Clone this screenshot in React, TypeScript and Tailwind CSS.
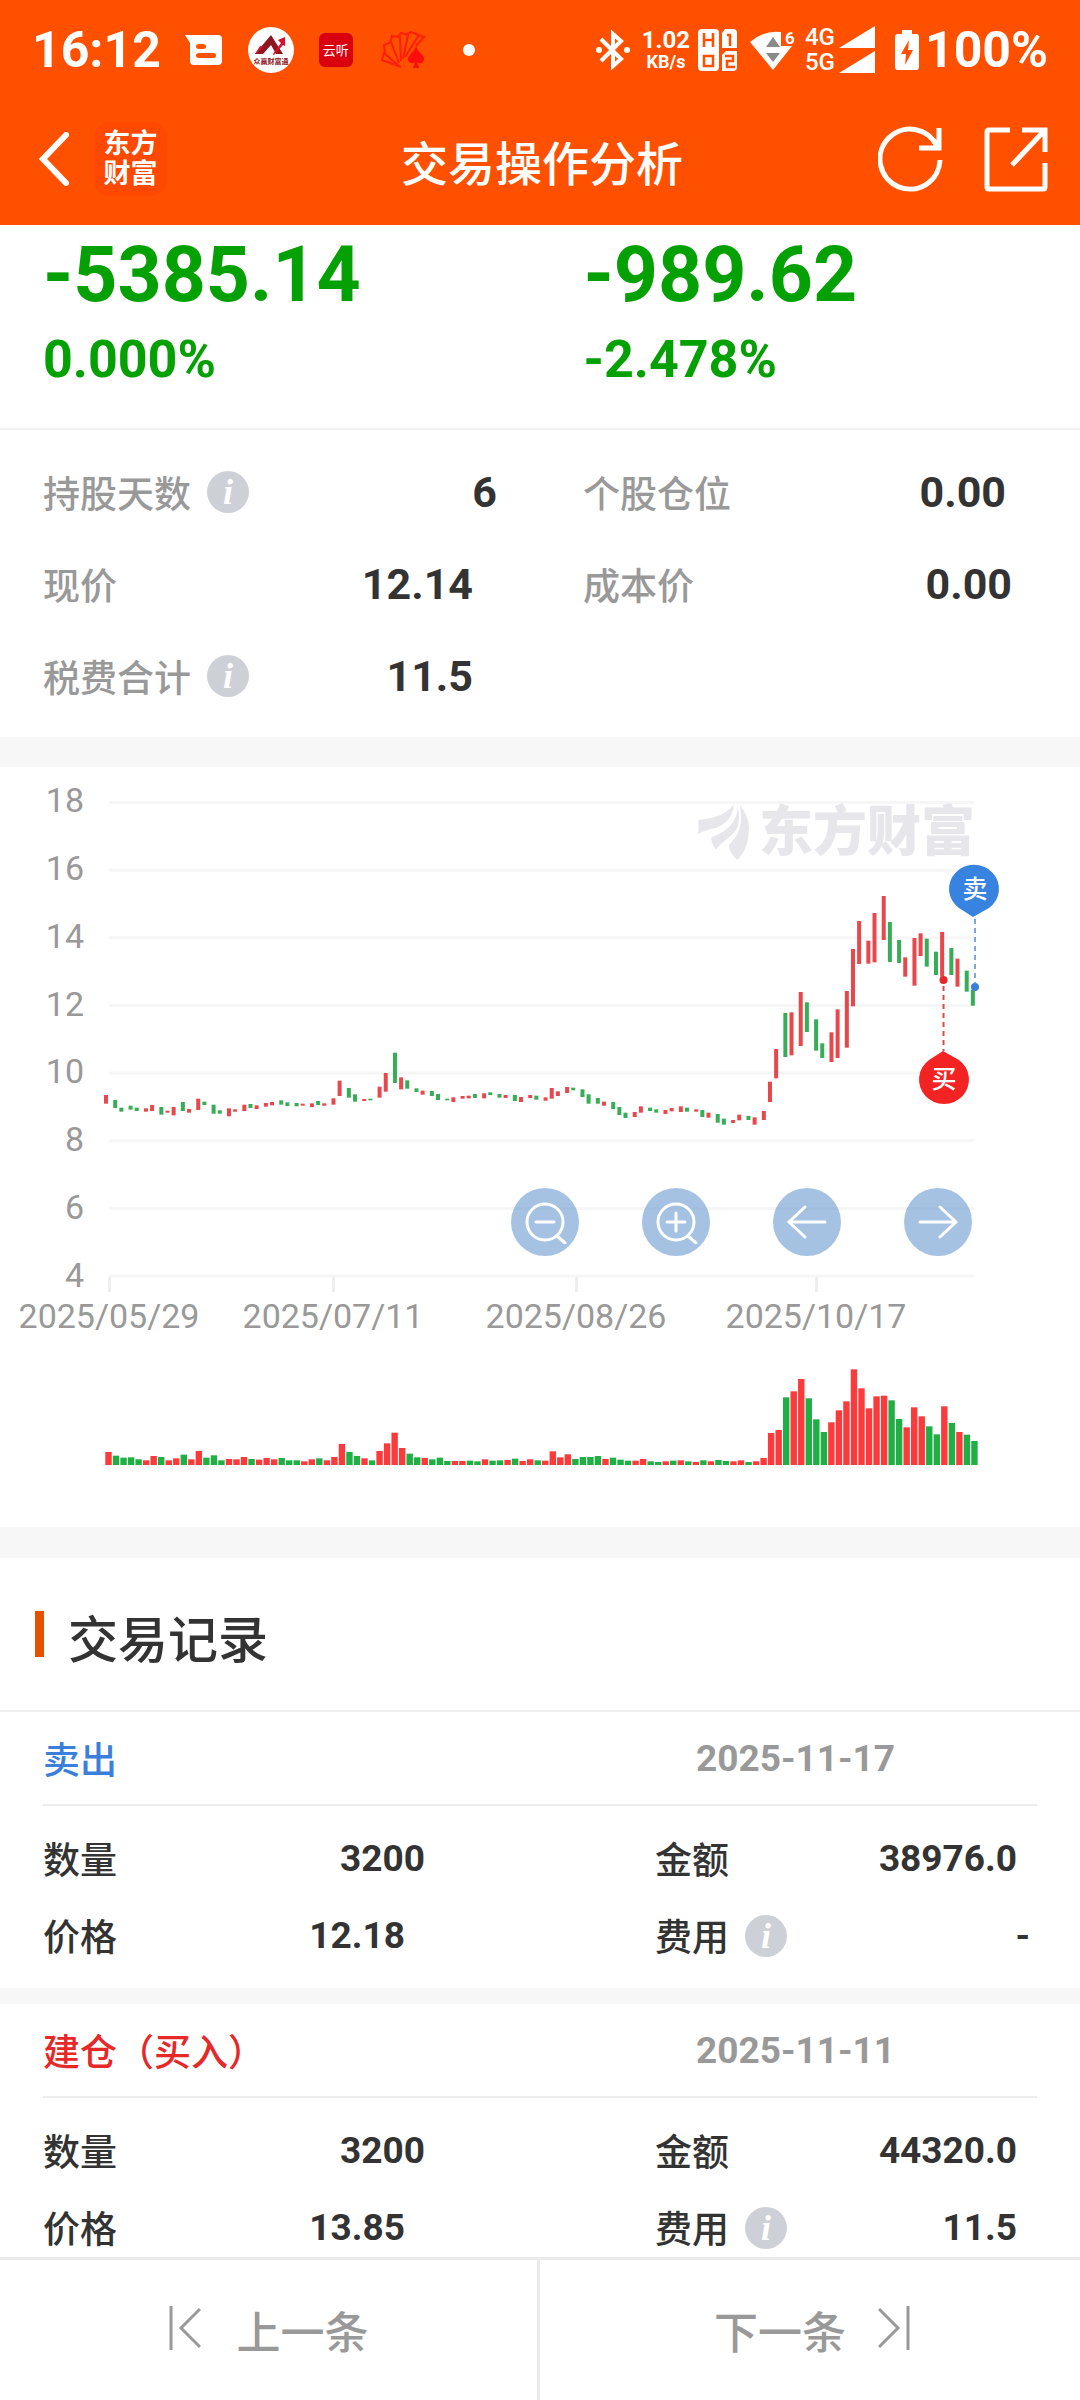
import type { ReactNode } from "react";

type Direction = "R" | "G";

interface Stat {
    label: string;
    value: string;
    hasInfo?: boolean;
    pad: string;
}

interface TradeRecord {
    title: string;
    titleColor: string;
    date: string;
    fields: Stat[];
}

const stats: Stat[] = [
    { label: "持股天数", value: "6", hasInfo: true, pad: "pr-[86px]" },
    { label: "个股仓位", value: "0.00", pad: "pr-[74px]" },
    { label: "现价", value: "12.14", pad: "pr-[110px]" },
    { label: "成本价", value: "0.00", pad: "pr-[68px]" },
    { label: "税费合计", value: "11.5", hasInfo: true, pad: "pr-[110px]" },
];

const records: TradeRecord[] = [
    {
        title: "卖出",
        titleColor: "text-[#3a80db]",
        date: "2025-11-17",
        fields: [
            { label: "数量", value: "3200", pad: "pr-[230px]" },
            { label: "金额", value: "38976.0", pad: "pr-[63px]" },
            { label: "价格", value: "12.18", pad: "pr-[250px]" },
            { label: "费用", value: "-", hasInfo: true, pad: "pr-[50px]" },
        ],
    },
    {
        title: "建仓（买入）",
        titleColor: "text-[#e62828]",
        date: "2025-11-11",
        fields: [
            { label: "数量", value: "3200", pad: "pr-[230px]" },
            { label: "金额", value: "44320.0", pad: "pr-[63px]" },
            { label: "价格", value: "13.85", pad: "pr-[250px]" },
            { label: "费用", value: "11.5", hasInfo: true, pad: "pr-[63px]" },
        ],
    },
];

// Top and bottom of each day's bar, in thirds of a chart unit below CANDLE_TOP
const CANDLE_TOP = 263;
const candles: [number, number, Direction][] = [
    [195, 221, "R"], [210, 234, "G"], [233, 245, "G"], [227, 239, "G"], [233, 243, "G"], [235, 245, "R"],
    [225, 243, "R"], [231, 254, "G"], [242, 248, "R"], [231, 256, "R"], [216, 243, "G"], [237, 248, "R"],
    [206, 240, "R"], [215, 225, "G"], [224, 251, "G"], [241, 251, "G"], [235, 259, "R"], [238, 245, "R"],
    [224, 243, "R"], [222, 234, "G"], [226, 237, "R"], [219, 230, "R"], [216, 226, "R"], [211, 224, "G"],
    [217, 228, "G"], [219, 229, "G"], [221, 227, "R"], [220, 231, "R"], [213, 225, "G"], [220, 227, "R"],
    [205, 224, "R"], [152, 198, "R"], [174, 203, "G"], [193, 215, "G"], [207, 213, "R"], [206, 211, "G"],
    [170, 203, "R"], [129, 185, "R"], [68, 159, "G"], [142, 178, "R"], [151, 176, "G"], [175, 186, "G"],
    [182, 194, "R"], [183, 198, "G"], [192, 210, "G"], [206, 211, "G"], [202, 216, "R"], [198, 206, "R"],
    [197, 205, "R"], [192, 204, "G"], [190, 205, "R"], [187, 195, "G"], [192, 203, "G"], [195, 204, "R"],
    [195, 213, "G"], [201, 216, "R"], [195, 204, "R"], [197, 209, "G"], [202, 212, "R"], [174, 206, "R"],
    [184, 198, "R"], [171, 189, "R"], [173, 181, "G"], [178, 201, "G"], [193, 221, "G"], [204, 221, "G"],
    [215, 227, "R"], [216, 237, "G"], [231, 255, "G"], [248, 264, "G"], [246, 261, "R"], [229, 248, "R"],
    [233, 243, "G"], [238, 248, "G"], [240, 252, "R"], [234, 244, "R"], [229, 246, "R"], [233, 245, "G"],
    [238, 245, "R"], [240, 261, "G"], [248, 263, "R"], [252, 278, "G"], [266, 284, "G"], [270, 279, "R"],
    [254, 271, "R"], [258, 270, "G"], [262, 284, "R"], [243, 270, "R"], [155, 216, "R"], [57, 145, "R"],
    [-51, 81, "G"], [-53, 76, "R"], [-114, 48, "R"], [-83, 6, "G"], [-32, 62, "G"], [40, 84, "G"],
    [7, 96, "R"], [-62, 84, "R"], [-117, 53, "R"], [-243, -71, "R"], [-327, -198, "R"], [-268, -199, "R"],
    [-351, -203, "R"], [-402, -270, "R"], [-324, -204, "G"], [-270, -201, "G"], [-218, -160, "R"], [-276, -133, "R"],
    [-290, -222, "R"], [-274, -190, "G"], [-235, -165, "G"], [-294, -160, "R"], [-246, -165, "G"], [-214, -130, "R"],
    [-178, -115, "G"], [-120, -73, "G"],
];

// Volume heights, same third-of-a-unit scale
const VOLUME_BASE = 698;
const volumes = [
    39, 28, 22, 23, 17, 14, 27, 24, 14, 20, 31, 17, 42, 22, 29, 14, 18, 17, 24, 18, 16, 21, 17, 21, 14, 14, 11, 17, 20,
    14, 24, 63, 39, 27, 20, 14, 42, 65, 97, 51, 34, 23, 21, 17, 22, 12, 12, 12, 13, 11, 17, 13, 14, 15, 19, 12, 17, 14,
    13, 41, 23, 32, 18, 24, 24, 27, 18, 22, 16, 13, 13, 18, 11, 9, 11, 13, 14, 11, 9, 14, 11, 15, 12, 11, 14, 9, 11, 21,
    96, 105, 203, 221, 258, 200, 137, 99, 128, 164, 191, 287, 230, 170, 206, 208, 194, 138, 113, 173, 146, 116, 92, 176,
    126, 99, 91, 72,
];
const volumeColors =
    "RGGGGRRGRRGRRGGGRRRGRRRGGGRRGRRRGGRGRRRRGGRGGGRRGGRGGRGRRG" +
    "RRRRGGGGRGGGRRGGRGRGRGRGGRRGRRRRGRRGGGRRRRRRRRGGRRRGGRGRGG";

const dates = [
    { x: 109, label: "2025/05/29" },
    { x: 333, label: "2025/07/11" },
    { x: 576, label: "2025/08/26" },
    { x: 816, label: "2025/10/17" },
];

// Days snap to a coarse column grid, so gaps alternate between two and three columns
const candleX = (i: number) => 106 + Math.floor(i * 2.45 + 0.9) * 3.074;

function InfoButton({ label }: { label: string }) {
    return (
        <button
            type="button"
            aria-label={`${label}说明`}
            className="ml-4 flex size-[42px] items-center justify-center rounded-full bg-[#cdd0d6] font-['Liberation_Serif',serif] text-[36px] leading-none font-bold text-white italic"
        >
            i
        </button>
    );
}

function StatusBar() {
    return (
        <div className="flex h-[100px] items-center pr-8 pl-8 text-white">
            <span className="text-[50px] leading-none font-bold">16:12</span>
            <svg className="ml-6" width="38" height="32" viewBox="0 0 38 32">
                <path
                    d="M0 1h33q4 0 4 4v22q0 4-4 4H9q-4 0-4-4V9zM14 10q-3 0-3 2.500t3 2.500h4q3 0 3-2.500t-3-2.500zM14 19q-3 0-3 2.500t3 2.500h14q3 0 3-2.500t-3-2.500z"
                    fill="#fff"
                    fillRule="evenodd"
                />
            </svg>
            <svg className="ml-6" width="48" height="48" viewBox="0 0 48 48">
                <circle cx="24" cy="24" r="23" fill="#fff" />
                <path d="M8 28 24 9l12 19h-7l-5-9-8 9z" fill="#8e1620" />
                <path d="m13 20 5 1 8 7 8-11-3-3 7-3v9l-2-1-9 10-10-9-8 8H8z" fill="#d90f2b" />
                <text x="24" y="38" textAnchor="middle" fontSize="7" fontWeight="700" fill="#8e1620">
                    众赢财富通
                </text>
            </svg>
            <div className="ml-6 flex size-[34px] items-center justify-center rounded-md bg-[#d9000f] text-[13px] leading-none">
                云听
            </div>
            <svg className="ml-7" width="46" height="38" viewBox="0 0 46 38" fill="none" stroke="#ff1d0c" strokeWidth="2">
                <path d="M20 36 1 29l2-7 14 12M4 22l-1-8 7-3 8 21M9 12l2-7 8 1 1 24M17 6l3-4 7 2-5 24M26 3l4-2 8 3-14 22M35 3l8 3-8 9" />
                <path
                    d="M35 15c2 7 9 9 8 14-1 4-5 4-7 2l2 6h-6l2-6c-2 2-6 2-7-2-1-5 6-7 8-14z"
                    fill="#ff0d0d"
                    stroke="none"
                />
            </svg>
            <span className="ml-9 size-3 rounded-full bg-white" />

            <div className="ml-auto flex items-center">
                <svg width="34" height="42" viewBox="0 0 34 42" fill="none" stroke="#fff" strokeWidth="4">
                    <path d="m5 10 20 20-8 7V5l8 7L5 32" />
                    <circle cx="3" cy="21" r="3" fill="#fff" stroke="none" />
                    <circle cx="31" cy="21" r="3" fill="#fff" stroke="none" />
                </svg>
                <div className="ml-3 flex w-12 flex-col items-center font-bold">
                    <span className="text-2xl leading-6">1.02</span>
                    <span className="text-lg leading-5">KB/s</span>
                </div>
                <svg className="ml-2" width="40" height="42" viewBox="0 0 40 42">
                    <rect x="0" y="0" width="21" height="42" rx="4" fill="#fff" />
                    <path d="M27 0h8q4 0 4 4v15H24V4z" fill="#fff" />
                    <path d="M28 22h11v16q0 4-4 4H24V26z" fill="#fff" />
                    <path
                        d="M6 4v14M15 4v14M6 11h9M6 27h9v10H6zM29 6h3v11M27 27h8v5h-6v6h8"
                        fill="none"
                        stroke="#ff5000"
                        strokeWidth="2.500"
                    />
                </svg>
                <svg className="ml-3" width="47" height="42" viewBox="0 0 47 42">
                    <path d="M0 13Q14 1 31 3v14h11L23 41z" fill="#fff" />
                    <path d="m23 8 7 10H16zM23 33l-7-9h14z" fill="#8a8a8a" />
                    <text x="35" y="15" fontSize="17" fontWeight="700" fill="#fff">
                        6
                    </text>
                </svg>
                <div className="ml-2 flex flex-col text-2xl leading-[25px] font-medium">
                    <span>4G</span>
                    <span>5G</span>
                </div>
                <svg className="ml-1" width="36" height="48" viewBox="0 0 36 48" fill="#fff">
                    <path d="M36 0v22H0zM36 25v22H0z" />
                </svg>
                <svg className="ml-5" width="24" height="42" viewBox="0 0 24 42">
                    <path d="M7 1h10v4h4q3 0 3 3v30q0 3-3 3H3q-3 0-3-3V8q0-3 3-3h4z" fill="#fff" />
                    <path d="M14 11 6 25h5l-1 11 8-15h-5z" fill="#ff5000" />
                </svg>
                <span className="ml-1.5 text-[50px] leading-none font-bold">100%</span>
            </div>
        </div>
    );
}

function NavBar() {
    return (
        <div className="grid h-[125px] grid-cols-[1fr_auto_1fr] items-center pr-8 pb-2 pl-9 text-white">
            <div className="flex items-center">
                <button type="button" aria-label="返回">
                    <svg width="34" height="54" viewBox="0 0 34 54" fill="none" stroke="#fff" strokeWidth="6" strokeLinecap="round">
                        <path d="M30 3 7 27l23 24" />
                    </svg>
                </button>
                <div className="ml-6 flex h-[74px] w-[73px] items-center justify-center rounded-2xl bg-[#ff4800] text-[27px] leading-[30px] font-bold">
                    <span className="w-[54px] text-center">东方财富</span>
                </div>
            </div>
            <h1 className="pt-3 text-[47px] leading-none font-medium">交易操作分析</h1>
            <div className="flex justify-end gap-10">
                <button type="button" aria-label="刷新">
                    <svg width="66" height="66" viewBox="0 0 66 66" fill="none" stroke="#fff" strokeWidth="5">
                        <path d="M62 34A30 30 0 1 1 59 20M61 2v20H41" />
                        <path d="M59 21 51 10" strokeWidth="3" />
                    </svg>
                </button>
                <button type="button" aria-label="分享">
                    <svg width="64" height="66" viewBox="0 0 64 66" fill="none" stroke="#fff" strokeWidth="5">
                        <path d="M26 4H5q-2 0-2 2v55q0 2 2 2h54q2 0 2-2V37M38 4h23v22M28 39 60 5" />
                    </svg>
                </button>
            </div>
        </div>
    );
}

function Field({ field, labelClass, valueClass }: { field: Stat; labelClass: string; valueClass: string }) {
    return (
        <div className={`flex items-center justify-between ${field.pad}`}>
            <dt className={`flex items-center text-[37px] leading-none font-medium ${labelClass}`}>
                <span className="pt-1.5">{field.label}</span>
                {field.hasInfo && <InfoButton label={field.label} />}
            </dt>
            <dd className={`leading-none font-bold text-[#333] ${valueClass}`}>{field.value}</dd>
        </div>
    );
}

function RoundButton({ label, children }: { label: string; children: ReactNode }) {
    return (
        <button
            type="button"
            aria-label={label}
            className="flex size-[68px] items-center justify-center rounded-full bg-[#4b85c7]/50"
        >
            <svg width="44" height="44" viewBox="0 0 44 44" fill="none" stroke="#fff" strokeWidth="3" strokeLinecap="round">
                {children}
            </svg>
        </button>
    );
}

function PriceChart() {
    return (
        <section className="relative">
            <svg className="block w-full" viewBox="0 0 1080 760" role="img" aria-label="股价走势">
                {[18, 16, 14, 12, 10, 8, 6, 4].map((price, i) => (
                    <g key={price}>
                        <rect x="109" y={34 + i * 67.65} width="865" height="3" fill="#f6f6f6" />
                        <text x="84" y={45 + i * 67.85} textAnchor="end" fontSize="34" fill="#999">
                            {price}
                        </text>
                    </g>
                ))}
                {dates.map((d) => (
                    <g key={d.label}>
                        <rect x={d.x - 1} y="510" width="3" height="15" fill="#eee" />
                        <text x={d.x} y="561" textAnchor="middle" fontSize="34" fill="#999">
                            {d.label}
                        </text>
                    </g>
                ))}

                <g fill="#e7e6ea">
                    <g transform="translate(540 3) scale(.3444 .37)">
                        <path d="M460 135Q540 128 563 92q-2 44-50 64-34 6-53 17z" />
                        <path d="M574 98q14 54-20 80-26 18-44 37-14-18-12-33 76-26 76-84z" />
                        <path d="M580 95q27 30 27 62-2 60-34 86-24-18-25-40 48-40 32-108z" />
                    </g>
                    <text x="759" y="84" fontSize="54" fontWeight="900">
                        东方财富
                    </text>
                </g>

                {candles.map(([top, bottom, dir], i) => (
                    <rect
                        key={i}
                        x={candleX(i) - 2}
                        y={CANDLE_TOP + top / 3}
                        width="4"
                        height={(bottom - top) / 3}
                        fill={dir === "R" ? "#e8484b" : "#36ad57"}
                    />
                ))}

                {volumes.map((v, i) => (
                    <rect
                        key={i}
                        x={105.3 + i * 7.53}
                        y={VOLUME_BASE - v / 3}
                        width="6.400"
                        height={v / 3}
                        fill={volumeColors[i] === "R" ? "#fb3a3c" : "#20af45"}
                    />
                ))}

                <path d="M975 152v64" stroke="#7aa9e2" strokeWidth="2" strokeDasharray="5 4" />
                <circle cx="975" cy="220" r="4" fill="#3a80db" />
                <path d="M973 150 959 141A25 24 0 1 1 989 141z" fill="#3882e0" />
                <text x="975" y="131" textAnchor="middle" fontSize="25" fontWeight="500" fill="#fff">
                    卖
                </text>

                <path d="M943.500 219v65" stroke="#dc4a4a" strokeWidth="2" strokeDasharray="5 4" />
                <circle cx="943.500" cy="213" r="4" fill="#e62828" />
                <path d="M943 284 929 293A25 24.500 0 1 0 959 293z" fill="#f32323" />
                <text x="944" y="321" textAnchor="middle" fontSize="25" fontWeight="500" fill="#fff">
                    买
                </text>
            </svg>
            <div className="absolute top-[421px] right-[10%] flex gap-[63px]">
                <RoundButton label="缩小">
                    <circle cx="22" cy="22" r="18" />
                    <path d="M13 22h18M34 36l8 7" />
                </RoundButton>
                <RoundButton label="放大">
                    <circle cx="22" cy="22" r="18" />
                    <path d="M13 22h18M22 13v18M34 36l8 7" />
                </RoundButton>
                <RoundButton label="向左">
                    <path d="M40 22H4M20 7 4 22l16 15" />
                </RoundButton>
                <RoundButton label="向右">
                    <path d="M4 22h36M24 7l16 15-16 15" />
                </RoundButton>
            </div>
        </section>
    );
}

function RecordCard({ record }: { record: TradeRecord }) {
    return (
        <article className="border-b-16 border-[#f7f7f7] pb-3">
            <div className="mx-[43px] grid h-[94px] grid-cols-[653px_1fr] items-center border-b-2 border-[#ededed]">
                <h3 className={`pt-1.5 text-[37px] leading-none font-medium ${record.titleColor}`}>{record.title}</h3>
                <time className="text-[37px] leading-none font-bold text-[#999]">{record.date}</time>
            </div>
            <dl className="grid auto-rows-[77px] grid-cols-[612px_1fr] pt-3.5 pb-0.5 pl-[43px]">
                {record.fields.map((f) => (
                    <Field key={f.label} field={f} labelClass="text-[#333]" valueClass="text-[37px]" />
                ))}
            </dl>
        </article>
    );
}

export default function App() {
    return (
        <div className="flex h-screen flex-col bg-white font-[Roboto,'Noto_Sans_CJK_SC',sans-serif]">
            <header className="shrink-0 bg-[#ff5000]">
                <StatusBar />
                <NavBar />
            </header>

            <main className="min-h-0 flex-1 overflow-y-auto [scrollbar-width:none]">
                <section className="grid h-[205px] grid-cols-2 border-b-2 border-[#f0f0f0] pt-2 pl-[43px] font-bold text-[#04a004]">
                    <div>
                        <p className="text-[77px] leading-[84px]">-5385.14</p>
                        <p className="text-[52px] leading-[86px]">0.000%</p>
                    </div>
                    <div className="pl-[22px]">
                        <p className="text-[77px] leading-[84px]">-989.62</p>
                        <p className="text-[52px] leading-[86px]">-2.478%</p>
                    </div>
                </section>

                <dl className="grid auto-rows-[92px] grid-cols-[540px_1fr] border-b-30 border-[#f7f7f7] pt-4 pb-[15px] pl-[43px]">
                    {stats.map((s) => (
                        <Field key={s.label} field={s} labelClass="text-[#999]" valueClass="text-[43px]" />
                    ))}
                </dl>

                <PriceChart />

                <section className="border-t-31 border-[#f7f7f7]">
                    <div className="flex h-[154px] items-center border-b-2 border-[#f0f0f0] pl-[35px]">
                        <span className="h-[46px] w-[9px] bg-[#e65100]" />
                        <h2 className="pt-3.5 pl-6 text-[50px] leading-none font-medium text-[#333]">交易记录</h2>
                    </div>
                    {records.map((r) => (
                        <RecordCard key={r.date} record={r} />
                    ))}
                </section>
            </main>

            <nav className="grid h-[143px] shrink-0 grid-cols-2 border-t-3 border-[#ebebeb] bg-white text-[44px] leading-none text-[#999]">
                <button type="button" className="flex items-center justify-center gap-9 border-r-3 border-[#ebebeb] pb-1">
                    <svg width="32" height="44" viewBox="0 0 32 44" fill="none" stroke="#999" strokeWidth="3">
                        <path d="M2 0v44M31 3 12 22l19 19" />
                    </svg>
                    <span className="pt-3 font-medium">上一条</span>
                </button>
                <button type="button" className="flex items-center justify-center gap-8 pb-1 pl-1">
                    <span className="pt-3 font-medium">下一条</span>
                    <svg width="32" height="44" viewBox="0 0 32 44" fill="none" stroke="#999" strokeWidth="3">
                        <path d="M30 0v44M1 3l19 19L1 41" />
                    </svg>
                </button>
            </nav>
        </div>
    );
}
